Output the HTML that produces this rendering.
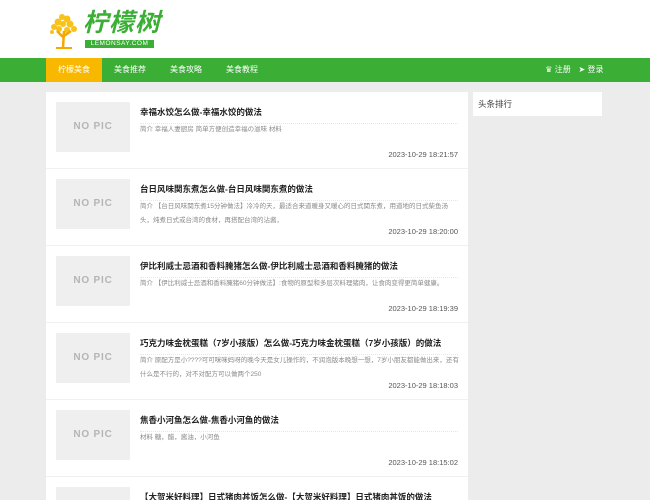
<!DOCTYPE html>
<html><head><meta charset="utf-8"><style>
*{margin:0;padding:0;box-sizing:border-box}
html,body{width:650px;height:500px;overflow:hidden}
body{background:#ececec;font-family:"Liberation Sans","Noto Sans CJK SC",sans-serif;position:relative}
.hdr{position:absolute;left:0;top:0;width:650px;height:58px;background:#fff}
.nav{position:absolute;left:0;top:58px;width:650px;height:24px;background:#3aae35}
.nav span{position:absolute;top:0;height:24px;line-height:24px;color:#fff;font-size:8px;text-align:center}
.main{position:absolute;left:46px;top:92px;width:422px;height:408px;background:#fff;overflow:hidden}
.item{position:absolute;left:0;width:422px;height:77px;border-bottom:1px solid #f0f0f0}
.pic{position:absolute;left:10px;top:10px;width:74px;height:50px;background:#efefef;color:#b5b5b5;font-weight:bold;font-size:10px;text-align:center;line-height:50px;letter-spacing:.8px}
.t{position:absolute;left:94px;top:14px;width:318px;font-size:8.5px;font-weight:bold;color:#222;white-space:nowrap;padding-bottom:5px;border-bottom:1px dotted #e6e6e6}
.d{position:absolute;left:94px;top:31px;width:320px;font-size:6.5px;color:#8a8a8a;line-height:14px}
.dt{position:absolute;right:10px;top:58px;font-size:7.5px;color:#555}
.side{position:absolute;left:473px;top:92px;width:129px;height:24px;background:#fff;font-size:8.5px;color:#444;line-height:24px;padding-left:5px}
</style></head><body>
<div class="hdr">
<svg style="position:absolute;left:48px;top:11px" width="32" height="40" viewBox="0 0 32 40">
<g fill="#f7c21a"><circle cx="14" cy="6" r="3"/><circle cx="19" cy="8" r="3.5"/><circle cx="10" cy="11" r="3.5"/><circle cx="22" cy="13" r="3.5"/><circle cx="15" cy="13" r="3"/><circle cx="6" cy="16" r="3"/><circle cx="26" cy="18" r="3"/><circle cx="11" cy="18" r="3"/><circle cx="19" cy="19" r="3"/><circle cx="4" cy="21" r="2"/></g>
<path d="M15 37 L16 20 M16 27 L9 20 M16 25 L23 20" stroke="#f5a800" stroke-width="2.5" fill="none"/>
<rect x="8" y="36" width="16" height="2" fill="#f5a800"/></svg>
<div style="position:absolute;left:83px;top:8px;font-size:25px;font-weight:bold;font-style:italic;color:#3aae35;letter-spacing:1px;line-height:30px">柠檬树</div>
<div style="position:absolute;left:85px;top:40px;width:69px;height:8px;background:#3aae35;color:#fff;font-size:6.5px;line-height:8px;text-align:center;letter-spacing:.5px">LEMONSAY.COM</div>
</div>
<div class="nav">
<span style="left:46px;width:56px;background:#f9b800">柠檬美食</span>
<span style="left:102px;width:56px">美食推荐</span>
<span style="left:158px;width:56px">美食攻略</span>
<span style="left:214px;width:56px">美食教程</span>
<span style="left:543px;width:30px">♛ 注册</span>
<span style="left:576px;width:30px">➤ 登录</span>
</div>
<div class="main">
<div class="item" style="top:0"><div class="pic">NO PIC</div><div class="t">幸福水饺怎么做-幸福水饺的做法</div><div class="d">简介 幸福人妻厨房 简单方便创造幸福の滋味 材料</div><div class="dt">2023-10-29 18:21:57</div></div>
<div class="item" style="top:77px"><div class="pic">NO PIC</div><div class="t">台日风味関东煮怎么做-台日风味関东煮的做法</div><div class="d">简介 【台日风味関东煮15分钟做法】冷冷的天，最适合来道暖身又暖心的日式関东煮，用道地的日式柴鱼汤头，炖煮日式或台湾的食材，再搭配台湾的沾酱，</div><div class="dt">2023-10-29 18:20:00</div></div>
<div class="item" style="top:154px"><div class="pic">NO PIC</div><div class="t">伊比利威士忌酒和香料腌猪怎么做-伊比利威士忌酒和香料腌猪的做法</div><div class="d">简介 【伊比利威士忌酒和香料腌猪60分钟做法】:食物的原型和多层次料理猪肉，让食肉变得更简单健康。</div><div class="dt">2023-10-29 18:19:39</div></div>
<div class="item" style="top:231px"><div class="pic">NO PIC</div><div class="t">巧克力味金枕蛋糕（7岁小孩版）怎么做-巧克力味金枕蛋糕（7岁小孩版）的做法</div><div class="d">简介 原配方是小????可可咪咪妈呀的晚今天是女儿操作的，不润泡版本晚想一想，7岁小朋友都能做出来，还有什么是不行的，对不对配方可以做两个250</div><div class="dt">2023-10-29 18:18:03</div></div>
<div class="item" style="top:308px"><div class="pic">NO PIC</div><div class="t">焦香小河鱼怎么做-焦香小河鱼的做法</div><div class="d">材料 糖，醋，酱油，小河鱼</div><div class="dt">2023-10-29 18:15:02</div></div>
<div class="item" style="top:385px"><div class="pic">NO PIC</div><div class="t">【大贺米好料理】日式猪肉丼饭怎么做-【大贺米好料理】日式猪肉丼饭的做法</div></div>
</div>
<div class="side">头条排行</div>
</body></html>
